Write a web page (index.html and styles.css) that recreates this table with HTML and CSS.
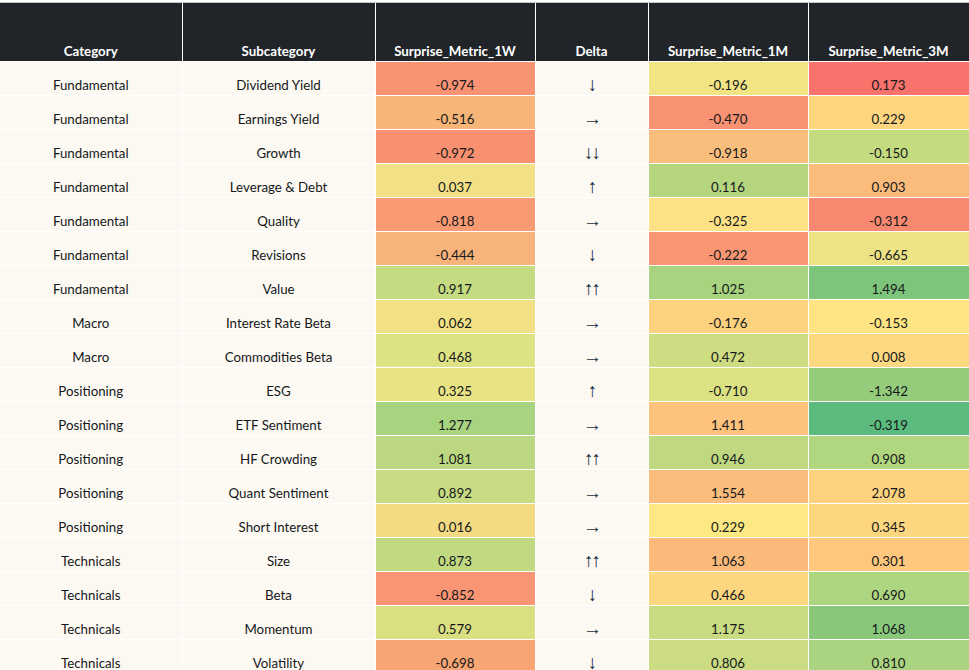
FILE: index.html
```html
<!DOCTYPE html>
<html>
<head>
<meta charset="utf-8">
<link rel="stylesheet" href="styles.css">
</head>
<body>
<div class="topstrip"></div>
<table class="grid">
  <colgroup>
    <col class="c-cat"><col class="c-sub"><col class="c-num"><col class="c-delta"><col class="c-num"><col class="c-num3">
  </colgroup>
  <thead>
    <tr>
      <th>Category</th><th>Subcategory</th><th>Surprise_Metric_1W</th><th>Delta</th><th>Surprise_Metric_1M</th><th>Surprise_Metric_3M</th>
    </tr>
  </thead>
  <tbody>
    <tr><td>Fundamental</td><td>Dividend Yield</td><td style="background:#f99374">-0.974</td><td class="d">↓</td><td style="background:#f2e383">-0.196</td><td style="background:#f8736c">0.173</td></tr>
    <tr><td>Fundamental</td><td>Earnings Yield</td><td style="background:#f8b578">-0.516</td><td class="d">→</td><td style="background:#f89272">-0.470</td><td style="background:#fdd67f">0.229</td></tr>
    <tr><td>Fundamental</td><td>Growth</td><td style="background:#f99170">-0.972</td><td class="d">↓↓</td><td style="background:#f9be7b">-0.918</td><td style="background:#c5db80">-0.150</td></tr>
    <tr><td>Fundamental</td><td>Leverage &amp; Debt</td><td style="background:#f1e085">0.037</td><td class="d">↑</td><td style="background:#b5d67f">0.116</td><td style="background:#fbbb7a">0.903</td></tr>
    <tr><td>Fundamental</td><td>Quality</td><td style="background:#f99a73">-0.818</td><td class="d">→</td><td style="background:#fde184">-0.325</td><td style="background:#f98870">-0.312</td></tr>
    <tr><td>Fundamental</td><td>Revisions</td><td style="background:#f8b37a">-0.444</td><td class="d">↓</td><td style="background:#f99572">-0.222</td><td style="background:#ede385">-0.665</td></tr>
    <tr><td>Fundamental</td><td>Value</td><td style="background:#c5db82">0.917</td><td class="d">↑↑</td><td style="background:#a8d47f">1.025</td><td style="background:#7dc57a">1.494</td></tr>
    <tr><td>Macro</td><td>Interest Rate Beta</td><td style="background:#f2e084">0.062</td><td class="d">→</td><td style="background:#fcd27f">-0.176</td><td style="background:#fee482">-0.153</td></tr>
    <tr><td>Macro</td><td>Commodities Beta</td><td style="background:#dde283">0.468</td><td class="d">→</td><td style="background:#cfdd82">0.472</td><td style="background:#fcd880">0.008</td></tr>
    <tr><td>Positioning</td><td>ESG</td><td style="background:#e8e384">0.325</td><td class="d">↑</td><td style="background:#dce182">-0.710</td><td style="background:#94cc7c">-1.342</td></tr>
    <tr><td>Positioning</td><td>ETF Sentiment</td><td style="background:#a9d47f">1.277</td><td class="d">→</td><td style="background:#fdc27c">1.411</td><td style="background:#5bbb7e">-0.319</td></tr>
    <tr><td>Positioning</td><td>HF Crowding</td><td style="background:#bbd881">1.081</td><td class="d">↑↑</td><td style="background:#c0d981">0.946</td><td style="background:#b0d67f">0.908</td></tr>
    <tr><td>Positioning</td><td>Quant Sentiment</td><td style="background:#c6db82">0.892</td><td class="d">→</td><td style="background:#fbbd7b">1.554</td><td style="background:#fdd27f">2.078</td></tr>
    <tr><td>Positioning</td><td>Short Interest</td><td style="background:#f4da82">0.016</td><td class="d">→</td><td style="background:#fee883">0.229</td><td style="background:#fdd680">0.345</td></tr>
    <tr><td>Technicals</td><td>Size</td><td style="background:#c1da82">0.873</td><td class="d">↑↑</td><td style="background:#fbba7a">1.063</td><td style="background:#fdc77d">0.301</td></tr>
    <tr><td>Technicals</td><td>Beta</td><td style="background:#f99572">-0.852</td><td class="d">↓</td><td style="background:#fdd680">0.466</td><td style="background:#aed57f">0.690</td></tr>
    <tr><td>Technicals</td><td>Momentum</td><td style="background:#dadf82">0.579</td><td class="d">→</td><td style="background:#cadc82">1.175</td><td style="background:#89c87b">1.068</td></tr>
    <tr><td>Technicals</td><td>Volatility</td><td style="background:#f6a573">-0.698</td><td class="d">↓</td><td style="background:#cbdc82">0.806</td><td style="background:#aad47f">0.810</td></tr>
  </tbody>
</table>
</body>
</html>
```

FILE: styles.css
```css
html, body {
  margin: 0;
  padding: 0;
  background: #fcf9f2;
  overflow: hidden;
}
.topstrip {
  height: 2px;
  background: #ffffff;
  border-bottom: 1px solid #c4c4c4;
}
.grid {
  border-collapse: collapse;
  table-layout: fixed;
  width: 969px;
  font-family: Lato, "Liberation Sans", sans-serif;
  font-size: 13.3px;
  color: #15181b;
}
.c-cat { width: 182px; }
.c-sub { width: 193px; }
.c-num { width: 160px; }
.c-delta { width: 113px; }
.c-num3 { width: 161px; }
.grid th {
  background: #212529;
  color: #ffffff;
  font-weight: bold;
  height: 58px;
  box-sizing: border-box;
  padding: 0 4px 1px;
  line-height: 18px;
  vertical-align: bottom;
  text-align: center;
  border-left: 1px solid #ffffff;
  border-right: 1px solid #ffffff;
  border-bottom: 1px solid #ffffff;
}
.grid th:first-child { border-left: none; }
.grid td {
  height: 34px;
  box-sizing: border-box;
  padding: 13px 4px 0;
  line-height: 20px;
  vertical-align: top;
  text-align: center;
  white-space: nowrap;
  border: 1px solid #ffffff;
}
.grid td:first-child { border-left: none; }
.grid td.d {
  font-family: "Liberation Sans", sans-serif;
  font-size: 19px;
  line-height: 20px;
  letter-spacing: -2px;
  color: #1a2a44;
}
```
